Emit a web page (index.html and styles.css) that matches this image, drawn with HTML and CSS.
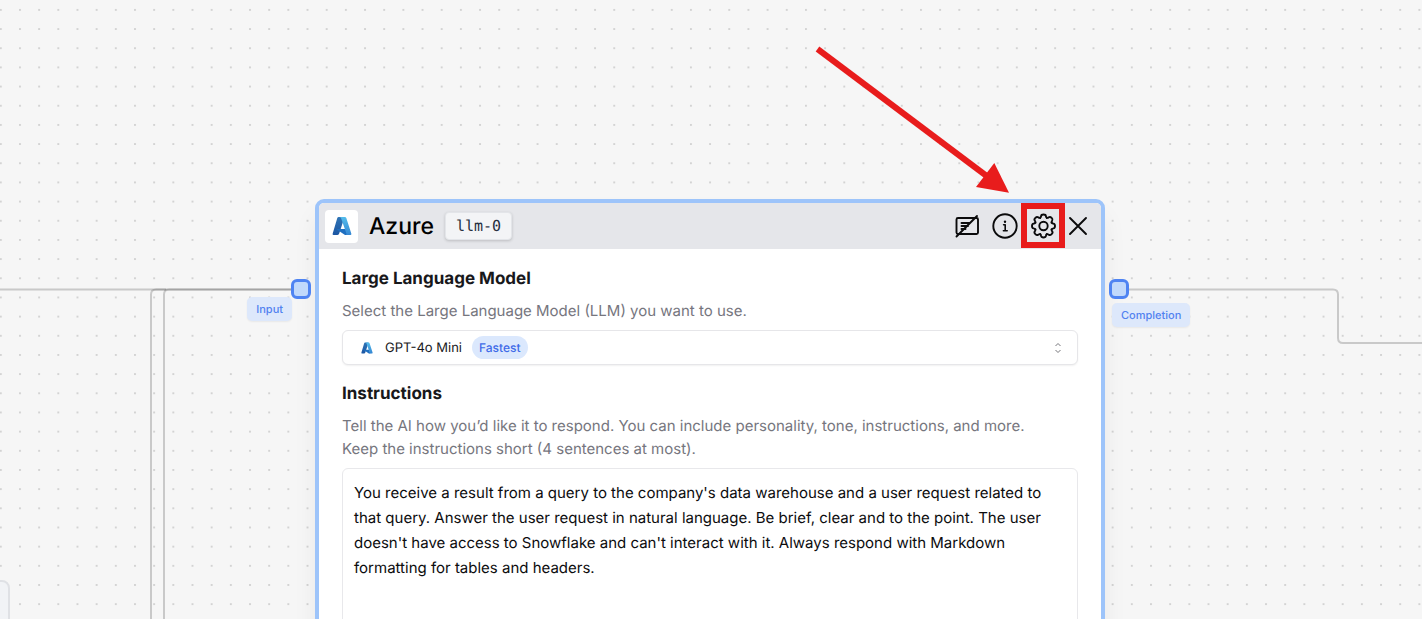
FILE: index.html
```html
<!DOCTYPE html>
<html lang="en">
<head>
<meta charset="utf-8">
<title>Flow editor</title>
<link rel="stylesheet" href="styles.css">
</head>
<body>
<main class="canvas">
  <svg class="layer" aria-hidden="true">
    <defs>
      <pattern id="dots" x="-8.8" y="0.3" width="19.17" height="19.17" patternUnits="userSpaceOnUse">
        <circle cx="9.6" cy="9.6" r="1.05" fill="#cbcbcb"/>
      </pattern>
      <linearGradient id="az1" x1="0" y1="0" x2="0" y2="1"><stop offset="0" stop-color="#2f74b5"/><stop offset="1" stop-color="#1c56a3"/></linearGradient>
      <linearGradient id="az2" x1="0" y1="0" x2="0" y2="1"><stop offset="0" stop-color="#55bdec"/><stop offset="1" stop-color="#3486d2"/></linearGradient>
      <symbol id="azure" viewBox="0 0 20 20">
        <path d="M6.600 1h6L7.200 17.400q-.6 1.600-2 1.600H1.600q-1.400 0-.9-1.500L5.300 2q.4-1 1.300-1z" fill="url(#az1)"/>
        <path d="M5.400 13h8.200l2 6h-2.600l-7.800-5.200q-.7-.6.200-.8z" fill="#1f6fc0"/>
        <path d="M7 1h5.800q1.100 0 1.500 1l5 15.500q.4 1.500-1 1.500h-4.600q1.100-.3.700-1.500L9 2q-.5-1-2-1z" fill="url(#az2)"/>
      </symbol>
      <path id="tooth" d="M8.100-3.350Q8.800-2.500 9.900-2.400Q11.500-2.200 11.500 0Q11.500 2.200 9.900 2.400Q8.800 2.500 8.100 3.350"/>
    </defs>
    <rect width="100%" height="100%" fill="url(#dots)"/>
    <g class="edges">
      <path d="M0 289.500H291"/>
      <path d="M151 700V294.500q0-5 5-5H166"/>
      <path d="M164 700V294.500q0-5 5-5H291"/>
      <path d="M1129 289.500H1333q5 0 5 5V338q0 5 5 5H2400"/>
    </g>
  </svg>

  <div class="neighbour"></div>

  <article class="node">
    <div class="card">
      <header class="head">
        <span class="logo"><svg class="logo-icon" role="img" aria-label="Azure"><use href="#azure"/></svg></span>
        <h1 class="name">Azure</h1>
        <code class="tag">llm-0</code>
        <div class="tools">
          <button class="tool" type="button" aria-label="Hide comments">
            <svg viewBox="0 0 26 26"><rect x="2.500" y="5" width="21.500" height="16" rx="1.500"/><path d="M2.500 23.500L23 3M7.500 10h8M7.500 13h6.500M7.500 16h4"/></svg>
          </button>
          <button class="tool" type="button" aria-label="Information">
            <svg viewBox="0 0 26 26"><circle cx="13" cy="13" r="11.700"/><path class="thin" d="M11.600 11.800h1.600v5.800M11.400 17.800h3.800"/><circle class="dot" cx="13" cy="8.700" r="1.200"/></svg>
          </button>
          <button class="tool" type="button" aria-label="Settings">
            <svg viewBox="-13.500 -13 26 26"><circle r="4.200"/><use href="#tooth"/><use href="#tooth" transform="rotate(45)"/><use href="#tooth" transform="rotate(90)"/><use href="#tooth" transform="rotate(135)"/><use href="#tooth" transform="rotate(180)"/><use href="#tooth" transform="rotate(225)"/><use href="#tooth" transform="rotate(270)"/><use href="#tooth" transform="rotate(315)"/></svg>
          </button>
          <button class="tool close" type="button" aria-label="Close">
            <svg viewBox="0 0 26 26"><path d="M5 5L21 21M21 5L5 21"/></svg>
          </button>
        </div>
      </header>
      <div class="body">
        <label class="label" for="model">Large Language Model</label>
        <p class="hint">Select the Large Language Model (LLM) you want to use.</p>
        <div class="picker">
          <select class="select" id="model"><option>GPT-4o Mini</option></select>
          <div class="picker-face">
            <svg class="model-icon" aria-hidden="true"><use href="#azure"/></svg>
            <span class="pill">Fastest</span>
            <svg class="chevrons" viewBox="0 0 8 12" aria-hidden="true"><path d="M1.500 4L4 1.500L6.500 4M1.500 8L4 10.500L6.500 8"/></svg>
          </div>
        </div>
        <label class="label" for="instructions">Instructions</label>
        <p class="hint">Tell the AI how you’d like it to respond. You can include personality, tone, instructions, and more.<br>Keep the instructions short (4 sentences at most).</p>
        <textarea class="text" id="instructions" rows="8" spellcheck="false">You receive a result from a query to the company's data warehouse and a user request related to that query. Answer the user request in natural language. Be brief, clear and to the point. The user doesn't have access to Snowflake and can't interact with it. Always respond with Markdown formatting for tables and headers.</textarea>
      </div>
    </div>
    <span class="port port-in"></span>
    <span class="port-name port-name-in">Input</span>
    <span class="port port-out"></span>
    <span class="port-name port-name-out">Completion</span>
  </article>

  <svg class="layer" aria-hidden="true">
    <path d="M817.500 49L988 177" fill="none" stroke="#e81c1c" stroke-width="6"/>
    <path d="M994.300 163L976 187L1009 192.700z" fill="#e81c1c"/>
    <rect x="1024" y="206" width="38" height="39" fill="none" stroke="#e81c1c" stroke-width="6"/>
  </svg>
</main>
</body>
</html>
```
FILE: styles.css
```css
* { box-sizing: border-box; }
body { margin: 0; font-family: Inter, "Liberation Sans", sans-serif; text-rendering: geometricPrecision; color: #18181b; }
.canvas { position: relative; height: 100vh; overflow: hidden; background: #f6f6f6; }
.layer { position: absolute; inset: 0; width: 100%; height: 100%; pointer-events: none; }
.edges { fill: none; stroke: #000; stroke-width: 2; }
.edges path { stroke-opacity: .18; }

.neighbour {
  position: absolute; left: -290px; top: 580px; width: 300px; height: 200px;
  background: #f1f3f6; border: 2px solid #dfe1e5; border-radius: 8px;
}
.node { position: absolute; left: 315px; top: 199px; width: 790px; }
.card {
  background: #fff; border: 4px solid #9dc4fa; border-radius: 9px; overflow: hidden;
  box-shadow: 0 16px 24px rgba(0, 0, 0, .06);
}
.head { display: flex; align-items: center; height: 46px; padding: 0 10px 0 6px; background: #e5e6ea; }
.logo { display: grid; place-items: center; width: 33px; height: 33px; background: #fff; border-radius: 4px; }
.logo-icon { width: 20px; height: 20px; }
.name { margin: 0 11px; font-size: 23px; line-height: 30px; font-weight: 500; color: #000; }
.tag {
  padding: 0 10px; border: 1px solid #e3e5e9; border-radius: 4px; background: #f3f4f6;
  box-shadow: 0 1px 3px rgba(0, 0, 0, .18);
  font: 15px/26px "DejaVu Sans Mono", "Liberation Mono", monospace; color: #27303f;
}
.tools { display: flex; gap: 12px; margin-left: auto; }
.tool { width: 26px; height: 26px; padding: 0; border: 0; background: none; }
.tool svg { display: block; width: 26px; height: 26px; fill: none; stroke: #0b0b0c; stroke-width: 1.9; stroke-linecap: round; stroke-linejoin: round; }
.tool .thin { stroke-width: 1.6; }
.tool .dot { fill: #0b0b0c; stroke: none; }
.close { margin-left: -3px; }

.body { padding: 18px 23px 24px; }
.label { display: block; font-size: 17px; line-height: 24px; font-weight: 700; }
.hint { margin: 8px 0; font-size: 15px; line-height: 23px; color: #76767e; }
.picker { display: grid; margin-bottom: 17px; }
.select, .picker-face { grid-area: 1 / 1; height: 35px; }
.select {
  appearance: none; width: 100%; padding: 0 42px; border: 1px solid #e6e6e9; border-radius: 6px;
  background: #fff; box-shadow: 0 1px 2px rgba(0, 0, 0, .06);
  font-family: inherit; font-size: 13px; line-height: 20px; color: #18181b; text-rendering: inherit;
}
.picker-face { display: flex; align-items: center; padding: 0 16px 0 18px; pointer-events: none; }
.model-icon { width: 14px; height: 12px; }
.pill { margin-left: 98px; padding: 0 7px; border-radius: 12px; background: #dbe8fd; font-size: 12px; line-height: 23px; font-weight: 500; color: #3f6be8; }
.chevrons { width: 8px; height: 12px; margin-left: auto; fill: none; stroke: #77777c; stroke-width: 1; }
.text {
  display: block; width: 100%; padding: 11px; border: 1px solid #e8e8eb; border-radius: 6px;
  resize: none; background: #fff; font-family: inherit; font-size: 15px; line-height: 25px; color: #0c0c0e; text-rendering: inherit;
}

.port { position: absolute; top: 80px; width: 20px; height: 20px; border: 3px solid #4f84f2; border-radius: 6px; background: #c1d9fb; }
.port-in { left: -24px; }
.port-out { right: -24px; }
.port-name {
  position: absolute; padding: 0 9px; border-radius: 5px; background: #dde8fb;
  box-shadow: 0 1px 2px rgba(0, 0, 0, .06);
  font-size: 11px; line-height: 24px; font-weight: 500; color: #5182f0;
}
.port-name-in { right: 813px; top: 98px; }
.port-name-out { left: 797px; top: 104px; }
```
